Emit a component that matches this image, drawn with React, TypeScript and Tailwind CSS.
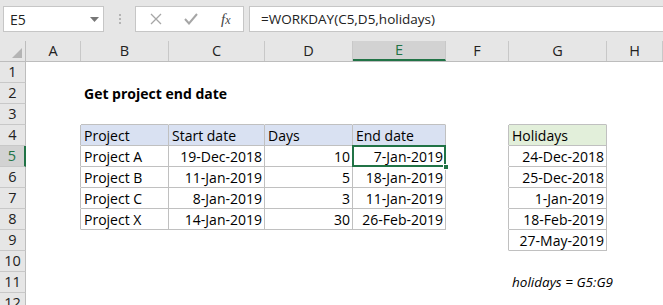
import React from 'react';

const cols = ['A', 'B', 'C', 'D', 'E', 'F', 'G', 'H'];
const widths = ['w-[55px]', 'w-[88px]', 'w-[96px]', 'w-[88px]', 'w-[93px]', 'w-[63px]', 'w-[98px]', 'flex-1'];

type Cell = { text?: string; align?: 'left' | 'right'; fill?: string; bold?: boolean; italic?: boolean };

const projects = [
  ['Project A', '19-Dec-2018', '10', '7-Jan-2019'],
  ['Project B', '11-Jan-2019', '5', '18-Jan-2019'],
  ['Project C', '8-Jan-2019', '3', '11-Jan-2019'],
  ['Project X', '14-Jan-2019', '30', '26-Feb-2019'],
];
const holidays = ['24-Dec-2018', '25-Dec-2018', '1-Jan-2019', '18-Feb-2019', '27-May-2019'];

// sheet content keyed by "row:colIndex"
const data: Record<string, Cell> = {
  '2:1': { text: 'Get project end date', bold: true },
  '4:1': { text: 'Project', fill: 'bg-[#d9e1f2]' },
  '4:2': { text: 'Start date', fill: 'bg-[#d9e1f2]' },
  '4:3': { text: 'Days', fill: 'bg-[#d9e1f2]' },
  '4:4': { text: 'End date', fill: 'bg-[#d9e1f2]' },
  '4:6': { text: 'Holidays', fill: 'bg-[#e2efda]' },
  '11:6': { text: 'holidays = G5:G9', italic: true },
};
projects.forEach((p, i) => {
  data[`${5 + i}:1`] = { text: p[0] };
  data[`${5 + i}:2`] = { text: p[1], align: 'right' };
  data[`${5 + i}:3`] = { text: p[2], align: 'right' };
  data[`${5 + i}:4`] = { text: p[3], align: 'right' };
});
holidays.forEach((h, i) => {
  data[`${5 + i}:6`] = { text: h, align: 'right' };
});

const inMain = (r: number, c: number) => r >= 4 && r <= 8 && c >= 1 && c <= 4;
const inHol = (r: number, c: number) => r >= 4 && r <= 9 && c === 6;

function borderClasses(r: number, c: number) {
  const out: string[] = [];
  const boxed = inMain(r, c) || inHol(r, c);
  // right edge: own box, or the box starts in the next column
  if (boxed || inMain(r, c + 1) || inHol(r, c + 1)) out.push('border-r border-r-[#c0c0c0]');
  else out.push('border-r border-r-transparent');
  if (boxed || inMain(r + 1, c) || inHol(r + 1, c)) out.push('border-b border-b-[#c0c0c0]');
  else out.push('border-b border-b-transparent');
  return out.join(' ');
}

function SheetCell({ r, c }: { r: number; c: number }) {
  const cell = data[`${r}:${c}`];
  return (
    <div
      className={`${widths[c]} h-[21px] shrink-0 ${borderClasses(r, c)} ${cell?.fill ?? 'bg-transparent'} ${
        cell?.align === 'right' ? 'text-right pr-[2px]' : 'pl-[3px]'
      } ${cell?.bold ? 'font-bold' : ''} ${cell?.italic ? 'italic text-[13.5px]' : 'text-[14px]'} whitespace-nowrap leading-[21px] text-black overflow-visible`}
    >
      {cell?.text}
    </div>
  );
}

export default function App() {
  const rows = Array.from({ length: 12 }, (_, i) => i + 1);
  return (
    <div
      className="w-[663px] h-[305px] overflow-hidden bg-white relative"
      style={{ fontFamily: '"Open Sans", "Liberation Sans", sans-serif' }}
    >
      {/* formula bar */}
      <div className="h-[41px] bg-[#e6e6e6] flex items-start pt-[6px]">
        <div className="ml-[3px] w-[101px] h-[26px] bg-white border border-[#c6c6c6] flex items-center justify-between pl-[6px] pr-[4px]">
          <span className="text-[14px] text-[#222]">E5</span>
          <svg width="9" height="5" viewBox="0 0 9 5">
            <path d="M0 0 L9 0 L4.5 5 Z" fill="#777" />
          </svg>
        </div>
        <div className="w-[31px] h-[26px] flex flex-col items-center justify-center gap-[2px]">
          <span className="w-[2px] h-[2px] bg-[#b4b4b4]" />
          <span className="w-[2px] h-[2px] bg-[#b4b4b4]" />
          <span className="w-[2px] h-[2px] bg-[#b4b4b4]" />
        </div>
        <div className="w-[109px] h-[26px] bg-white border border-[#c6c6c6] flex items-center">
          <svg width="12" height="12" viewBox="0 0 12 12" className="ml-[14px]">
            <path d="M1 1 L11 11 M11 1 L1 11" stroke="#a6a6a6" strokeWidth="1.3" />
          </svg>
          <svg width="14" height="12" viewBox="0 0 14 12" className="ml-[22px]">
            <path d="M1 6 L5 10.5 L13 1" stroke="#a6a6a6" strokeWidth="2" fill="none" />
          </svg>
          <span
            className="ml-[23px] italic text-[15px] text-[#444]"
            style={{ fontFamily: '"Liberation Serif", serif' }}
          >
            f<span className="text-[12px]">x</span>
          </span>
        </div>
        <div className="ml-[5px] flex-1 h-[26px] bg-white border border-r-0 border-[#c6c6c6] flex items-center pl-[11px] text-[13.5px] text-[#222]">
          =WORKDAY(C5,D5,holidays)
        </div>
      </div>

      {/* column headers */}
      <div className="flex h-[21px] bg-[#e6e6e6] border-b border-[#bdbdbd]">
        <div className="w-[26px] shrink-0 border-r border-[#bdbdbd] relative">
          <svg width="10" height="10" viewBox="0 0 10 10" className="absolute right-[3px] bottom-[3px]">
            <path d="M10 0 L10 10 L0 10 Z" fill="#b4b4b4" />
          </svg>
        </div>
        {cols.map((c, i) => (
          <div
            key={c}
            className={`${widths[i]} shrink-0 border-r border-[#c8c8c8] flex items-center justify-center text-[14.5px] ${
              c === 'E' ? 'bg-[#d2d2d2] text-[#217346] border-b-2 border-b-[#217346]' : 'text-[#222]'
            }`}
          >
            {c}
          </div>
        ))}
      </div>

      {/* sheet rows */}
      {rows.map((r) => (
        <div key={r} className="flex">
          <div
            className={`w-[26px] h-[21px] shrink-0 border-b border-[#c8c8c8] flex items-center justify-center text-[14.5px] ${
              r === 5
                ? 'bg-[#d2d2d2] text-[#217346] border-r-2 border-r-[#217346]'
                : 'bg-[#e6e6e6] text-[#222] border-r border-r-[#bdbdbd]'
            }`}
          >
            {r}
          </div>
          {cols.map((_, c) => (
            <SheetCell key={c} r={r} c={c} />
          ))}
        </div>
      ))}

      {/* active cell E5 */}
      <div className="absolute left-[352px] top-[145px] w-[94px] h-[22px] border-2 border-[#217346] pointer-events-none" />
      <div className="absolute left-[443px] top-[164px] w-[6px] h-[6px] bg-[#217346] border border-white" />
    </div>
  );
}
